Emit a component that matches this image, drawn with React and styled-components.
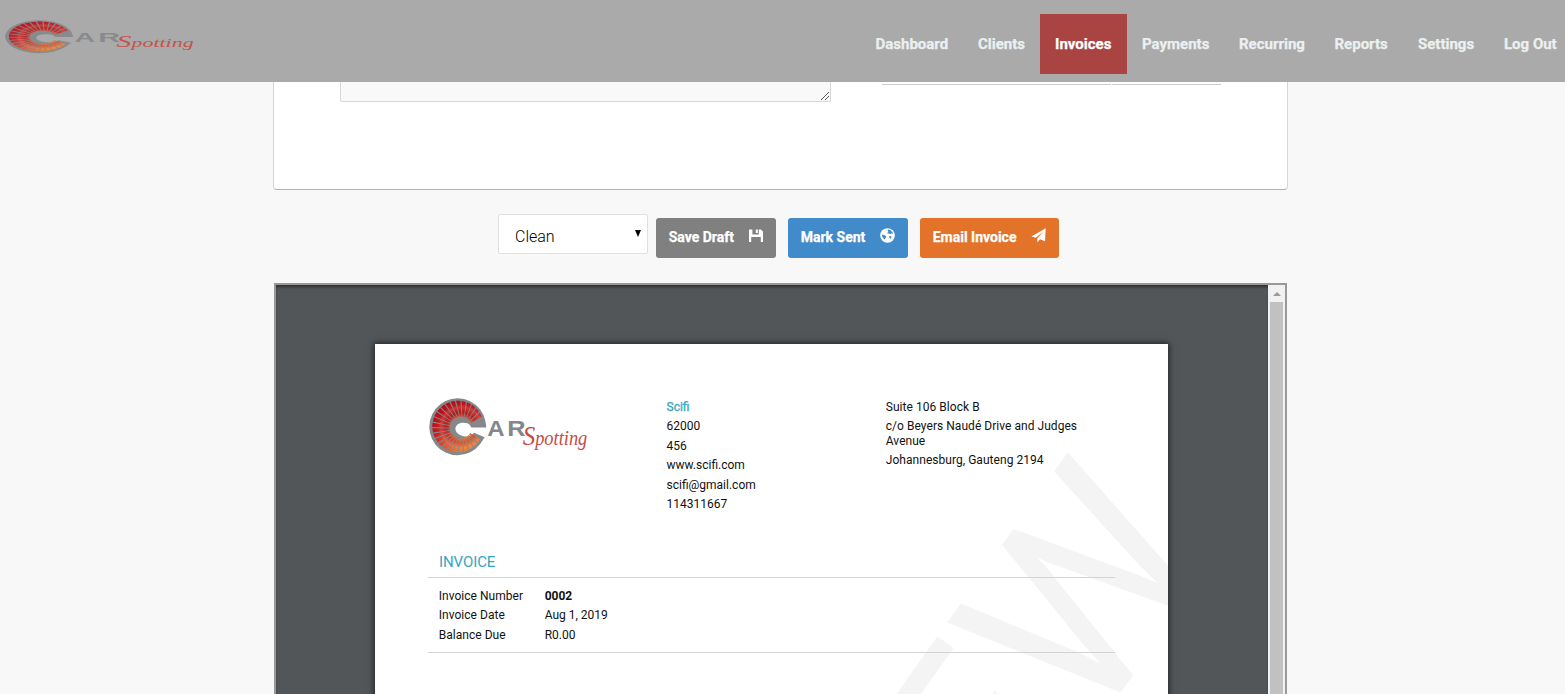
import React from "react";
import styled, { createGlobalStyle } from "styled-components";

const GlobalStyle = createGlobalStyle`
  * { box-sizing: border-box; }
  body {
    margin: 0;
    height: 694px;
    overflow: hidden;
    background: #f8f8f8;
    font-family: Roboto, "Liberation Sans", sans-serif;
    color: #111;
  }
`;

const Screen = styled.div`
  height: 694px;
  overflow: hidden;
`;

const Header = styled.header`
  height: 82px;
  background: #aaaaaa;
  display: flex;
  justify-content: space-between;
  align-items: flex-start;
`;

const Brand = styled.div`
  padding: 20px 0 0 6px;
  line-height: 0;
  opacity: ${(p) => p.$opacity || 1};
`;

const Nav = styled.nav`
  display: flex;
  padding: 14px 0 0;
  margin-right: -7px;
`;

const NavItem = styled.a`
  height: 60px;
  line-height: 60px;
  padding: 0 15px;
  font-size: 15px;
  font-weight: 700;
  white-space: nowrap;
  width: ${(p) => p.$width}px;
  color: ${(p) => (p.$active ? "#ffffff" : "#ecf0f1")};
  background: ${(p) => (p.$active ? "#a94442" : "transparent")};
  -webkit-text-stroke: 0.25px currentColor;
`;

const Container = styled.main`
  width: 1015px;
  margin-left: 273px;
`;

const Card = styled.section`
  height: 108px;
  background: #fff;
  border: 1px solid #d6d6d6;
  border-top: 0;
  border-bottom-color: #b0b0b0;
  border-radius: 0 0 4px 4px;
  padding: 0 66px;
  display: flex;
  justify-content: space-between;
`;

const Notes = styled.div`
  width: 491px;
  height: 20px;
  background: #f9f9f9;
  border: 1px solid #d8d8d8;
  border-top: 0;
  border-radius: 0 0 2px 2px;
  display: flex;
  justify-content: flex-end;
  align-items: flex-end;
  padding: 0 1px 1px 0;
`;

const Totals = styled.div`
  display: flex;
  gap: 1px;
  height: 3px;
`;

const TotalCell = styled.div`
  width: ${(p) => p.$width}px;
  border-bottom: 1px solid #cccccc;
`;

const Toolbar = styled.div`
  display: flex;
  padding: 24px 0 0 225px;
  height: 93px;
`;

const Select = styled.div`
  width: 150px;
  height: 40px;
  margin-right: 8px;
  padding: 4px 6px 0 16px;
  background: #fff;
  border: 1px solid #dfe0e1;
  border-radius: 2px;
  display: flex;
  align-items: center;
  justify-content: space-between;
  font-size: 16px;
  font-weight: 300;
  color: #000;
`;

const Arrow = styled.i`
  border: 3.5px solid transparent;
  border-top: 7px solid #000;
  border-bottom: 0;
  margin-top: -5px;
`;

const Button = styled.button`
  width: ${(p) => p.$width}px;
  height: 40px;
  margin: 4px 12px 0 0;
  padding: 0 13px 2px 12.7px;
  border: 0;
  border-radius: 3px;
  background: ${(p) => p.$color};
  color: #fff;
  font: 700 14px Roboto, sans-serif;
  -webkit-text-stroke: 0.25px currentColor;
  display: flex;
  align-items: center;
  justify-content: space-between;
  white-space: nowrap;
  svg { margin-top: -3px; }
`;

const Viewer = styled.section`
  width: 1013px;
  height: 420px;
  margin-left: 1px;
  border: 2px solid #999999;
  background: #525659;
  display: flex;
`;

const Desk = styled.div`
  flex: 1;
  padding: 59px 0 0 99px;
  overflow: hidden;
  box-shadow: inset 0 3px 3px -1px rgba(0, 0, 0, 0.45);
`;

const Scrollbar = styled.div`
  width: 17px;
  background: #f1f1f1;
  display: flex;
  flex-direction: column;
  align-items: center;
`;

const ScrollUp = styled.i`
  margin: 7px 0 5px;
  border: 4px solid transparent;
  border-top: 0;
  border-bottom: 4px solid #9a9a9a;
`;

const Thumb = styled.div`
  width: 13px;
  flex: 1;
  margin-top: 1px;
  background: #c1c1c1;
`;

const Page = styled.article`
  position: relative;
  width: 793px;
  height: 400px;
  overflow: hidden;
  background: #fff;
  padding: 53px 53px 0;
  font-size: 12px;
`;

const PageShadow = styled.div`
  width: 793px;
  box-shadow: 0 0 6px 1px rgba(0, 0, 0, 0.6);
`;

const Watermark = styled.svg`
  position: absolute;
  left: 0;
  top: 0;
  text {
    font-family: Roboto, sans-serif;
    font-size: 256px;
    fill: #f4f4f4;
  }
`;

const PageContent = styled.div`
  position: relative;
`;

const Masthead = styled.div`
  display: flex;
  height: 152px;
`;

const LogoCell = styled.div`
  width: 238.5px;
  padding: 1px 0 0 1.5px;
  line-height: 0;
`;

const Details = styled.div`
  width: 219.3px;
  padding-top: 1px;
  letter-spacing: ${(p) => p.$spacing || 0}px;
`;

const Line = styled.div`
  line-height: ${(p) => (p.$wrap ? 15 : 19.4)}px;
  padding: ${(p) => (p.$wrap ? "2px 0 2px" : "0")};
  width: 200px;
  color: ${(p) => (p.$accent ? "#36a6c2" : "inherit")};
  -webkit-text-stroke: ${(p) => (p.$accent ? "0.3px currentColor" : "0")};
`;

const Title = styled.h2`
  margin: 0;
  height: 28px;
  padding: 3px 0 0 11px;
  font-size: 15px;
  letter-spacing: -0.1px;
  line-height: 20px;
  font-weight: 400;
  color: #36a6c2;
`;

const Summary = styled.div`
  width: 687px;
  height: 76px;
  border-top: 1px solid #d3d3d3;
  border-bottom: 1px solid #d3d3d3;
  padding: 9px 0 0 10.7px;
`;

const SummaryRow = styled.div`
  display: flex;
  line-height: 19.4px;
  font-weight: ${(p) => p.$weight || 400};
`;

const Label = styled.span`
  width: 106px;
  font-weight: 400;
  letter-spacing: 0.04px;
`;

const SPOKE_STEP = (Math.PI * 2) / 29;
const spokes = Array.from({ length: 25 }, (_, i) => {
  const a = 0.52 + i * SPOKE_STEP;
  const at = (cx, cy, r, t) =>
    `${(cx + r * Math.cos(t)).toFixed(1)},${(cy + r * Math.sin(t)).toFixed(1)}`;
  return [
    at(112, 125, 77, a),
    at(112, 125, 77, a + SPOKE_STEP * 0.78),
    at(120, 128, 33, a + SPOKE_STEP * 0.72),
    at(120, 128, 33, a + SPOKE_STEP * 0.05),
  ].join(" ");
});

function Logo({ width, height }) {
  return (
    <svg width={width} height={height} viewBox="28 40 474 170" preserveAspectRatio="none" overflow="visible">
      <defs>
        <linearGradient id="ember" gradientUnits="userSpaceOnUse" x1="75" y1="50" x2="140" y2="200">
          <stop offset="0" stopColor="#b00d18" />
          <stop offset="0.45" stopColor="#c41e22" />
          <stop offset="0.75" stopColor="#e2603a" />
          <stop offset="1" stopColor="#ec9632" />
        </linearGradient>
        <radialGradient id="glow" gradientUnits="userSpaceOnUse" cx="122" cy="128" r="88">
          <stop offset="0.35" stopColor="#ffb04c" stopOpacity="0.45" />
          <stop offset="0.52" stopColor="#a01810" stopOpacity="0.25" />
          <stop offset="0.7" stopColor="#ff9070" stopOpacity="0.3" />
          <stop offset="0.82" stopColor="#d01010" stopOpacity="0.1" />
          <stop offset="1" stopColor="#900010" stopOpacity="0.3" />
        </radialGradient>
      </defs>
      <path
        d="M194 108 A85 85 0 1 0 178 178 L192 157 L160 144 Q150 157 128 154 Q104 148 104 131 Q106 117 123 114 Q141 112 147 120 L152 128 L197 128 Z"
        fill="#85878a"
      />
      {spokes.map((points) => (
        <React.Fragment key={points}>
          <polygon points={points} fill="url(#ember)" />
          <polygon points={points} fill="url(#glow)" />
        </React.Fragment>
      ))}
      <g fontFamily="Liberation Sans" fontWeight="700" fontSize="64" fill="#85878a">
        <text x="200" y="154" textLength="52" lengthAdjust="spacingAndGlyphs">A</text>
        <text x="260" y="154" textLength="55" lengthAdjust="spacingAndGlyphs">R</text>
      </g>
      <text x="306" y="180" textLength="194" lengthAdjust="spacingAndGlyphs" fontFamily="Liberation Serif" fontStyle="italic" fontSize="62" fill="#c94a40">
        <tspan fontSize="84">S</tspan>potting
      </text>
    </svg>
  );
}

const SaveIcon = () => (
  <svg width="14" height="14" viewBox="0 0 14 14" fill="#fff">
    <path d="M0 .5h3.4v5h6.4V.5h2L14 2.6V13h-2.2V8H2.2v5H0z M6.8 .5h2v3.4h-2z" />
  </svg>
);

const GlobeIcon = () => (
  <svg width="15" height="15" viewBox="0 0 15 15">
    <circle cx="7.5" cy="7.5" r="7.3" fill="#fff" />
    <path
      d="M8.2 1.6 10.6 2.2 12.7 4.6 12.8 5.8 11.4 5.4 10.2 6 9 5.4 7.8 5.8 7.2 4.8 8.6 4 7.6 3z M2 6.4 4.2 7 6 8.2 6.2 9.4 5.2 10.4 4.8 11.6 3.4 10.6 2.2 8.8z M9.2 8 11 8.2 11.6 9.2 10.6 10.8 9.6 10.2z"
      fill="#428bca"
    />
  </svg>
);

const SendIcon = () => (
  <svg width="15" height="15" viewBox="0 0 15 15" fill="#fff">
    <path d="M14.7.3 14 13.2 9 11.3 6.3 14.6V10.4L12 3.9 4.7 9.8.4 8.4z" />
  </svg>
);

const Grip = () => (
  <svg width="8" height="8" viewBox="0 0 8 8" stroke="#555" strokeWidth="1">
    <path d="M0 8 8 0 M4 8 8 4" />
  </svg>
);

const navItems = [
  ["Dashboard", 102.5],
  ["Clients", 77],
  ["Invoices", 87],
  ["Payments", 97],
  ["Recurring", 95.5],
  ["Reports", 83.5],
  ["Settings", 86],
  ["Log Out", 83],
];

export default function App() {
  return (
    <Screen>
      <GlobalStyle />
      <Header>
        <Brand $opacity={0.9}>
          <Logo width={188.5} height={33} />
        </Brand>
        <Nav>
          {navItems.map(([name, width]) => (
            <NavItem key={name} $width={width} $active={name === "Invoices"}>{name}</NavItem>
          ))}
        </Nav>
      </Header>
      <Container>
        <Card>
          <Notes><Grip /></Notes>
          <Totals>
            <TotalCell $width={229} />
            <TotalCell $width={109} />
          </Totals>
        </Card>
        <Toolbar>
          <Select>Clean<Arrow /></Select>
          <Button $width={120} $color="#808080">Save Draft<SaveIcon /></Button>
          <Button $width={120} $color="#428bca">Mark Sent<GlobeIcon /></Button>
          <Button $width={139} $color="#e27329">Email Invoice<SendIcon /></Button>
        </Toolbar>
        <Viewer>
          <Desk>
            <PageShadow>
              <Page>
                <Watermark width="793" height="400">
                  <text textAnchor="end" transform="translate(844.5 209) rotate(-54.7) scale(0.975 1)">PREVIEW</text>
                </Watermark>
                <PageContent>
                  <Masthead>
                    <LogoCell><Logo width={158} height={57} /></LogoCell>
                    <Details>
                      <Line $accent>Scifi</Line>
                      <Line>62000</Line>
                      <Line>456</Line>
                      <Line>www.scifi.com</Line>
                      <Line>scifi@gmail.com</Line>
                      <Line>114311667</Line>
                    </Details>
                    <Details $spacing={0.04}>
                      <Line>Suite 106 Block B</Line>
                      <Line $wrap>c/o Beyers Naudé Drive and Judges Avenue</Line>
                      <Line>Johannesburg, Gauteng 2194</Line>
                    </Details>
                  </Masthead>
                  <Title>INVOICE</Title>
                  <Summary>
                    <SummaryRow $weight={700}><Label>Invoice Number</Label>0002</SummaryRow>
                    <SummaryRow><Label>Invoice Date</Label>Aug 1, 2019</SummaryRow>
                    <SummaryRow><Label>Balance Due</Label>R0.00</SummaryRow>
                  </Summary>
                </PageContent>
              </Page>
            </PageShadow>
          </Desk>
          <Scrollbar>
            <ScrollUp />
            <Thumb />
          </Scrollbar>
        </Viewer>
      </Container>
    </Screen>
  );
}
